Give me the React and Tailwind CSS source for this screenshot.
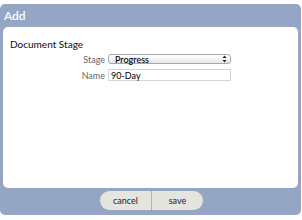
import React from "react";

export default function App() {
  return (
    <div className="w-[302px] h-[220px] bg-white pt-[4px]" style={{ fontFamily: "Lato, 'Open Sans', sans-serif" }}>
      <div className="w-[301px] h-[211px] rounded-[5px] bg-[#94a6c4] flex flex-col">
        <div className="h-[23px] flex items-center pl-[4px] text-white text-[12px] font-semibold leading-none">Add</div>
        <div className="mx-[3px] h-[161px] bg-white rounded-[5px] pt-[12px] pl-[7px]">
          <div className="text-[10px] text-[#222] leading-none font-medium">Document Stage</div>
          <div className="mt-[5px] grid grid-cols-[95px_123px] gap-x-[3px] gap-y-[5px] items-center">
            <div className="text-right text-[9px] text-[#666] leading-none">Stage</div>
            <div className="h-[10px] rounded-[3px] border border-[#a8a8a8] bg-gradient-to-b from-white to-[#e8e8e8] flex items-center justify-between pl-[6px] pr-[3px]">
              <span className="text-[9px] text-black font-medium leading-none">Progress</span>
              <svg width="5" height="8" viewBox="0 0 5 8"><path d="M0.5 3 L2.5 0.5 L4.5 3 Z M0.5 5 L2.5 7.5 L4.5 5 Z" fill="#222"/></svg>
            </div>
            <div className="text-right text-[9px] text-[#666] leading-none">Name</div>
            <div className="h-[12px] border border-[#d4d4d4] bg-white flex items-center pl-[2px]">
              <span className="text-[9px] text-black leading-none">90-Day</span>
            </div>
          </div>
        </div>
        <div className="flex justify-center mt-[3px]">
          <div className="flex h-[19px] w-[103px] rounded-full bg-[#e5e5e0] overflow-hidden ml-[2px]">
            <button className="flex-1 text-[9px] text-[#222] leading-none border-r border-[#a9b4c6]">cancel</button>
            <button className="flex-1 text-[9px] text-[#222] leading-none">save</button>
          </div>
        </div>
      </div>
    </div>
  );
}
